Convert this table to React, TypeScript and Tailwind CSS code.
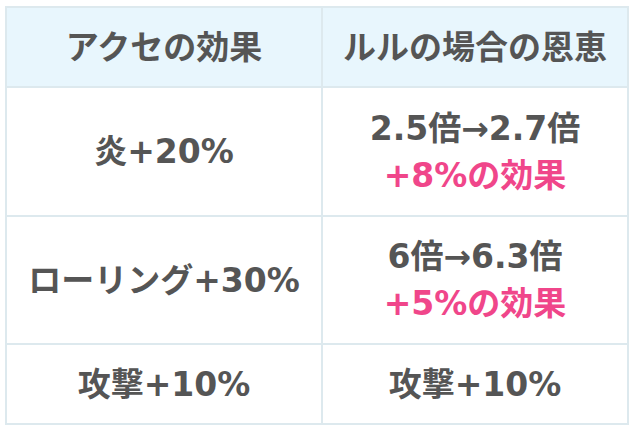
import React from "react";

const font = { fontFamily: '"DejaVu Sans", "Noto Sans CJK JP", sans-serif' };

export default function App() {
  return (
    <div className="w-[635px] h-[432px] bg-white pt-[6px] pl-[5px]" style={font}>
      <div className="w-[624px] border-2 border-[#dde9ee] text-[#555555] font-bold text-[33px] leading-[47px]">
        <div className="flex h-[80px] bg-[#e8f6fd] border-b-2 border-[#dde9ee]">
          <div className="w-[316px] border-r-2 border-[#dde9ee] flex items-center justify-center">アクセの効果</div>
          <div className="flex-1 flex items-center justify-center">ルルの場合の恩恵</div>
        </div>
        <div className="flex h-[129px] border-b-2 border-[#dde9ee]">
          <div className="w-[316px] border-r-2 border-[#dde9ee] flex items-center justify-center">炎+20%</div>
          <div className="flex-1 flex flex-col items-center justify-center">
            <div>2.5倍→2.7倍</div>
            <div className="text-[#f0468a]">+8%の効果</div>
          </div>
        </div>
        <div className="flex h-[128px] border-b-2 border-[#dde9ee]">
          <div className="w-[316px] border-r-2 border-[#dde9ee] flex items-center justify-center">ローリング+30%</div>
          <div className="flex-1 flex flex-col items-center justify-center">
            <div>6倍→6.3倍</div>
            <div className="text-[#f0468a]">+5%の効果</div>
          </div>
        </div>
        <div className="flex h-[78px]">
          <div className="w-[316px] border-r-2 border-[#dde9ee] flex items-center justify-center">攻撃+10%</div>
          <div className="flex-1 flex items-center justify-center">攻撃+10%</div>
        </div>
      </div>
    </div>
  );
}
